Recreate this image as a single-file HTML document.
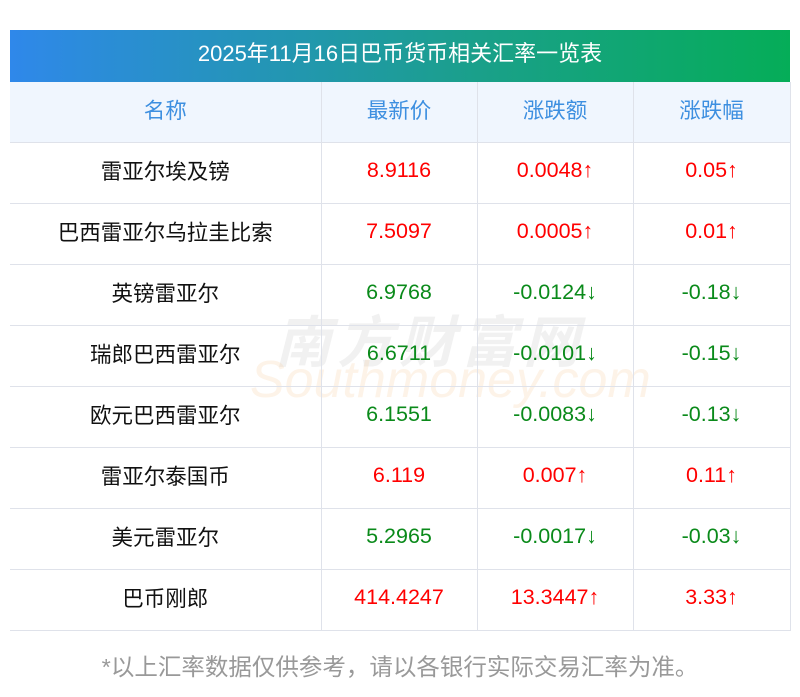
<!DOCTYPE html>
<html><head><meta charset="utf-8"><style>
body{margin:0;background:#fff;width:800px;height:697px;overflow:hidden;position:relative;font-family:"Liberation Sans","Noto Sans CJK SC",sans-serif}
.title{position:absolute;left:10px;top:30px;width:780px;height:52px;background:linear-gradient(90deg,#2f88ea,#1aa08a 60%,#05ad58);color:#fff;font-size:22px;line-height:48px;text-align:center}
table{position:absolute;left:10px;top:82px;width:780px;border-collapse:collapse;table-layout:fixed}
td{height:61px;border-bottom:1px solid #dfe2ea;border-left:1px solid #dfe2ea;text-align:center;font-size:21.5px;padding:0 0 4px 0;box-sizing:border-box;color:#111}
td:first-child{border-left:none}
tr td:last-child{border-right:1px solid #dfe2ea}
tr.h td{background:#f0f6fe;color:#3d8fe0}
.r{color:#f00}.g{color:#0a8a1a}
.foot{position:absolute;left:0;width:800px;top:648px;text-align:center;font-size:23.5px;color:#999}
.wm{position:absolute;color:rgba(200,200,200,.25);pointer-events:none}
</style></head><body>
<div class="title">2025年11月16日巴币货币相关汇率一览表</div>
<div class="wm" style="left:275px;top:298px;font-size:56px;font-weight:bold;letter-spacing:6px;font-style:italic">南方财富网</div>
<div class="wm" style="left:250px;top:350px;font-size:52px;font-style:italic;color:rgba(245,200,150,.22)">Southmoney.com</div>
<table>
<col style="width:311px"><col style="width:156px"><col style="width:156px"><col style="width:157px">
<tr class="h"><td style="height:60px">名称</td><td style="height:60px">最新价</td><td style="height:60px">涨跌额</td><td style="height:60px">涨跌幅</td></tr>
<tr><td>雷亚尔埃及镑</td><td class="r">8.9116</td><td class="r">0.0048↑</td><td class="r">0.05↑</td></tr>
<tr><td>巴西雷亚尔乌拉圭比索</td><td class="r">7.5097</td><td class="r">0.0005↑</td><td class="r">0.01↑</td></tr>
<tr><td>英镑雷亚尔</td><td class="g">6.9768</td><td class="g">-0.0124↓</td><td class="g">-0.18↓</td></tr>
<tr><td>瑞郎巴西雷亚尔</td><td class="g">6.6711</td><td class="g">-0.0101↓</td><td class="g">-0.15↓</td></tr>
<tr><td>欧元巴西雷亚尔</td><td class="g">6.1551</td><td class="g">-0.0083↓</td><td class="g">-0.13↓</td></tr>
<tr><td>雷亚尔泰国币</td><td class="r">6.119</td><td class="r">0.007↑</td><td class="r">0.11↑</td></tr>
<tr><td>美元雷亚尔</td><td class="g">5.2965</td><td class="g">-0.0017↓</td><td class="g">-0.03↓</td></tr>
<tr><td>巴币刚郎</td><td class="r">414.4247</td><td class="r">13.3447↑</td><td class="r">3.33↑</td></tr>
</table>
<div class="foot">*以上汇率数据仅供参考，请以各银行实际交易汇率为准。</div>
</body></html>
